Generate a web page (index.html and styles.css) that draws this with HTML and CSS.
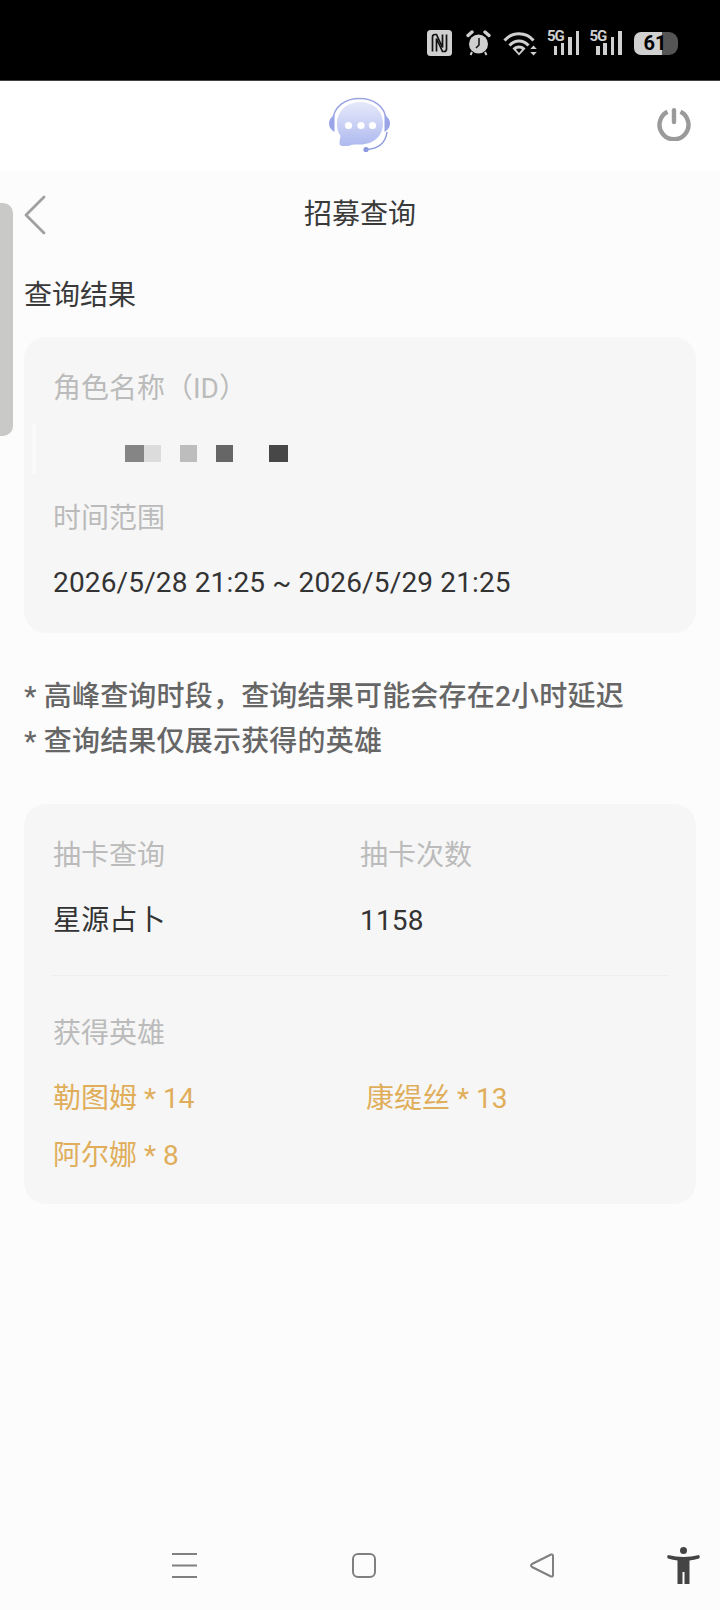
FILE: index.html
```html
<!DOCTYPE html>
<html lang="zh-CN">
<head>
    <meta charset="UTF-8">
    <meta name="viewport" content="width=device-width, initial-scale=1.0">
    <title>招募查询</title>
    <link rel="stylesheet" href="styles.css">
</head>
<body>
    <div class="status-bar">
        <svg class="st-nfc" width="25" height="26" viewBox="0 0 25 26">
            <rect x="0" y="0" width="25" height="26" rx="3.500" fill="#d0d0d0"/>
            <path d="M5.500 21.500V7q0-2.500 2.500-2.500h1.500l6 13V4.500" fill="none" stroke="#111" stroke-width="1.700"/>
            <path d="M19.500 4.500V19q0 2.500-2.500 2.500h-1.500l-6-13v13" fill="none" stroke="#111" stroke-width="1.700"/>
        </svg>
        <svg class="st-alarm" width="25" height="26" viewBox="0 0 25 26">
            <circle cx="12.500" cy="14" r="9.500" fill="#d0d0d0"/>
            <path d="M13 8v7l-3 3" fill="none" stroke="#111" stroke-width="1.500"/>
            <path d="M2 5.500 6 2M23 5.500 19 2" fill="none" stroke="#d0d0d0" stroke-width="3.400" stroke-linecap="round"/>
            <path d="M6 22 4.500 25M19 22l1.500 3" stroke="#d0d0d0" stroke-width="2"/>
        </svg>
        <svg class="st-wifi" width="34" height="25" viewBox="0 0 34 25">
            <g fill="none" stroke="#d0d0d0" stroke-width="3">
                <path d="M1.500 9.500C9 .5 23 .5 30.500 9.500"/>
                <path d="M6.500 14.500C12 8.500 20 8.500 25.500 14.500"/>
            </g>
            <path d="M16 14.500q-4 0-6.500 3l6.500 7 6.500-7q-2.500-3-6.500-3z" fill="#d0d0d0"/>
            <path d="M16 17.500q-2 0-3 1l3 3.500 3-3.500q-1-1-3-1z" fill="#000"/>
            <path d="M30.500 14.500l-3.300 3.500h6.600zM30.500 24.500l-3.300-3.500h6.600z" fill="#d0d0d0"/>
        </svg>
        <div class="st-signal">
            <span class="st-5g">5G</span>
            <i class="bar b1"></i><i class="bar b2"></i><i class="bar b3"></i><i class="bar b4"></i>
        </div>
        <div class="st-signal">
            <span class="st-5g">5G</span>
            <i class="bar b1"></i><i class="bar b2"></i><i class="bar b3"></i><i class="bar b4"></i>
        </div>
        <div class="st-battery">
            <span class="st-level">61</span>
        </div>
    </div>

    <header class="top-bar">
        <svg class="logo" width="64" height="58" viewBox="0 0 64 58">
            <defs>
                <linearGradient id="bubble" x1="0" y1="0" x2="0" y2="1">
                    <stop offset="0" stop-color="#e6e9fa"/>
                    <stop offset="1" stop-color="#aeb9ef"/>
                </linearGradient>
            </defs>
            <path d="M5 24C5 -6 58 -6 58 24" fill="none" stroke="#9aa4e2" stroke-width="1.500"/>
            <path d="M6.500 18q-5.500 3-5.500 8.500t5.500 8.500zM56.500 18q5.500 3 5.500 8.500t-5.500 8.500z" fill="#99a5e6"/>
            <path d="M32 5C18 5 9 15 9 27q0 7 3.500 12q-1 5-1 7q0 3 3 3h5q2 0 3.500-1q1-.5 4-.5h5c14 0 23-9 23-21S46 5 32 5z" fill="url(#bubble)"/>
            <circle cx="20.500" cy="28.500" r="3.600" fill="#fff"/>
            <circle cx="33" cy="28.500" r="3.600" fill="#fff"/>
            <circle cx="44.500" cy="28.500" r="3.600" fill="#fff"/>
            <path d="M59 35Q57 51 39 52.500" fill="none" stroke="#8d99de" stroke-width="1.500"/>
            <circle cx="38" cy="52.500" r="2.600" fill="#8d99de"/>
        </svg>
        <svg class="power" width="34" height="34" viewBox="0 0 34 34">
            <path d="M10.500 4.800a14.500 14.500 0 1 0 13 0" fill="none" stroke="#9a9a9a" stroke-width="4.400"/>
            <path d="M17 3.200V15" fill="none" stroke="#9a9a9a" stroke-width="4.400" stroke-linecap="round"/>
        </svg>
    </header>

    <div class="side-handle"></div>

    <main class="page">
        <div class="title-bar">
            <svg class="back" width="24" height="42" viewBox="0 0 24 42">
                <path d="M20 3 2 21l18 18" fill="none" stroke="#a0a0a0" stroke-width="2.800" stroke-linecap="round" stroke-linejoin="round"/>
            </svg>
            <h1>招募查询</h1>
        </div>

        <h2 class="section-title">查询结果</h2>

        <section class="card card-info">
            <div class="label">角色名称（ID）</div>
            <div class="value masked">
                <i class="px w19 c1"></i><i class="px w17 c2"></i><i class="px w17 c3 gap"></i><i class="px w17 c4 gap"></i><i class="px w19 c5 gap-wide"></i>
            </div>
            <div class="label">时间范围</div>
            <div class="value date">2026/5/28 21:25 ~ 2026/5/29 21:25</div>
        </section>

        <div class="notes">
            <p>* 高峰查询时段，查询结果可能会存在2小时延迟</p>
            <p>* 查询结果仅展示获得的英雄</p>
        </div>

        <section class="card card-result">
            <div class="result-head">
                <div class="col">
                    <div class="label">抽卡查询</div>
                    <div class="value">星源占卜</div>
                </div>
                <div class="col">
                    <div class="label">抽卡次数</div>
                    <div class="value">1158</div>
                </div>
            </div>
            <div class="divider"></div>
            <div class="label">获得英雄</div>
            <div class="heroes">
                <span>勒图姆 * 14</span>
                <span>康缇丝 * 13</span>
                <span>阿尔娜 * 8</span>
            </div>
        </section>
    </main>

    <nav class="nav-bar">
        <svg class="nav-menu" width="25" height="25" viewBox="0 0 25 25">
            <path d="M0 1h25M0 12.500h25M0 24h25" stroke="#808080" stroke-width="2"/>
        </svg>
        <svg class="nav-home" width="24" height="25" viewBox="0 0 24 25">
            <rect x="1" y="1" width="22" height="23" rx="5" fill="none" stroke="#808080" stroke-width="2"/>
        </svg>
        <svg class="nav-back" width="24" height="25" viewBox="0 0 24 25">
            <path d="M21 1.500q2-.5 2 1.500v19q0 2-2 1.500L2 14q-2-1.500 0-3z" fill="none" stroke="#808080" stroke-width="2" stroke-linejoin="round"/>
        </svg>
        <svg class="nav-access" width="33" height="37" viewBox="0 0 33 37">
            <circle cx="16.500" cy="3.500" r="3.500" fill="#444"/>
            <path d="M1 8q-1.500 2 0 3.500q5 1.500 9.500 2v23.500h5V25h2v12h5V13.500q4.500-.5 9.500-2q1.500-1.500 0-3.500q-8 2-15.500 2T1 8z" fill="#444"/>
        </svg>
    </nav>
</body>
</html>
```

FILE: styles.css
```css
* {
    box-sizing: border-box;
}

body {
    margin: 0;
    width: 720px;
    height: 1610px;
    position: relative;
    overflow: hidden;
    background-color: #fcfcfc;
    color: #333;
    font-family: "Roboto", "Noto Sans CJK SC", sans-serif;
}

.status-bar {
    height: 81px;
    background-color: #000;
    display: flex;
    align-items: flex-start;
    padding: 30px 0 0 427px;
    border-bottom: 1px solid #444;
}

.st-alarm {
    margin-left: 14px;
}

.st-wifi {
    margin-left: 12px;
    margin-top: 1px;
}

.st-signal {
    position: relative;
    width: 32px;
    height: 25px;
    margin-left: 10px;
    display: flex;
    align-items: flex-end;
    justify-content: flex-end;
    gap: 3.800px;
}

.st-signal + .st-signal {
    margin-left: 10.500px;
}

.st-5g {
    position: absolute;
    left: 0;
    top: 0;
    color: #d0d0d0;
    font-size: 15px;
    font-weight: 700;
    line-height: 12px;
    letter-spacing: -1.200px;
}

.bar {
    width: 3.500px;
    background-color: #d0d0d0;
}

.b1 { height: 9px; }
.b2 { height: 12px; }
.b3 { height: 18px; }
.b4 { height: 24px; }

.st-battery {
    width: 44px;
    height: 23px;
    margin-left: 12px;
    margin-top: 2px;
    border-radius: 7px 9px 9px 7px;
    background: linear-gradient(90deg, #d0d0d0 0 63%, #555 63%);
}

.st-level {
    display: block;
    padding-left: 10px;
    color: #000;
    font-size: 20px;
    font-weight: 700;
    line-height: 23px;
}

.top-bar {
    height: 89px;
    background-color: #fff;
    position: relative;
    display: flex;
    align-items: center;
    justify-content: center;
}

.power {
    position: absolute;
    right: 29px;
    top: 26px;
}

.side-handle {
    position: absolute;
    left: 0;
    top: 203px;
    width: 13px;
    height: 233px;
    background-color: #c9c9c7;
    border-radius: 0 10px 10px 0;
}

.page {
    padding: 0 24px;
}

.title-bar {
    position: relative;
    height: 86px;
    padding-bottom: 2px;
    display: flex;
    align-items: center;
    justify-content: center;
}

.title-bar h1 {
    margin: 0;
    font-size: 28px;
    font-weight: 400;
    color: #3a3a3a;
}

.back {
    position: absolute;
    left: 0;
    top: 24px;
}

.section-title {
    margin: 20px 0 0;
    font-size: 28px;
    line-height: 40px;
    font-weight: 400;
    color: #3a3a3a;
}

.card {
    position: relative;
    background-color: #f6f6f6;
    border-radius: 22px;
    padding: 27px 29px 0;
}

.card-info {
    margin-top: 21px;
    height: 296px;
}

.label {
    font-size: 28px;
    line-height: 50px;
    color: #bbb;
}

.value {
    font-size: 28px;
    line-height: 40px;
    letter-spacing: 0.150px;
    color: #333;
    margin-top: 20px;
    margin-bottom: 20px;
}

.masked {
    display: flex;
    align-items: center;
    height: 40px;
    padding-left: 72px;
    margin-top: 19px;
    margin-bottom: 21px;
}

.date {
    margin-top: 19px;
}

/* faint strip left of the blurred name */
.masked::before {
    content: "";
    position: absolute;
    left: 8px;
    top: 87px;
    width: 4px;
    height: 50px;
    background-color: #fafafa;
}

.px {
    height: 17px;
}

.w19 { width: 19px; }
.w17 { width: 17px; }
.c1 { background-color: #858585; }
.c2 { background-color: #dcdcdc; }
.c3 { background-color: #bdbdbd; }
.c4 { background-color: #666; }
.c5 { background-color: #474747; }
.gap { margin-left: 19px; }
.gap-wide { margin-left: 36px; }

.notes {
    margin-top: 41px;
    font-size: 28px;
    font-weight: 500;
    line-height: 45px;
    letter-spacing: 0.200px;
    color: #666;
}

.notes p {
    margin: 0;
}

.card-result {
    margin-top: 40px;
    height: 400px;
}

.result-head {
    display: flex;
}

.col {
    width: 307px;
}

.divider {
    height: 1px;
    background-color: #efefef;
    margin: 14px 0 33px -2px;
    width: 618px;
}

.heroes {
    display: grid;
    grid-template-columns: 313px 1fr;
    margin-top: 11px;
    font-size: 28px;
    line-height: 57px;
    color: #e0ae5a;
}

.nav-bar {
    position: absolute;
    left: 0;
    right: 0;
    bottom: 0;
    height: 90px;
}

.nav-menu,
.nav-home,
.nav-back,
.nav-access {
    position: absolute;
    top: 33px;
}

.nav-menu { left: 172px; }
.nav-home { left: 352px; }
.nav-back { left: 530px; }
.nav-access { left: 667px; top: 27px; }
```
